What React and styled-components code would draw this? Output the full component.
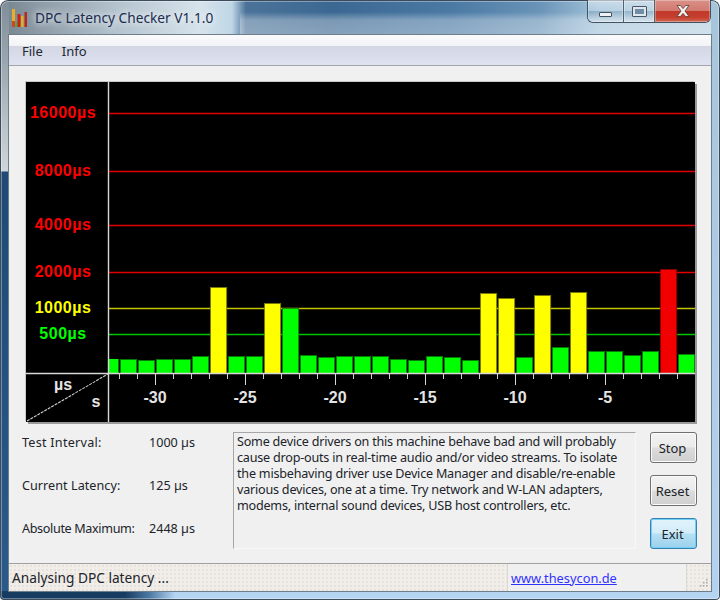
import React from "react";
import styled, { createGlobalStyle } from "styled-components";

const Global = createGlobalStyle`
  html, body { margin: 0; padding: 0; background: #fff; overflow: hidden; }
  #root { width: 720px; height: 600px; }
`;

const UI = `"Noto Sans", "Open Sans", sans-serif`;

const Win = styled.div`
  box-sizing: border-box;
  width: 720px;
  height: 600px;
  display: flex;
  flex-direction: column;
  padding: 0 9px 9px 9px;
  border-radius: 8px 8px 4px 4px;
  box-shadow: inset 0 0 0 1px #3c4c5a, inset 0 0 0 2px rgba(255,255,255,.35);
  background:
    linear-gradient(90deg, #173c62 0, #173c62 125px, #4f7ba4 150px, #b4d4f2 175px, #b4d4f2 100%) 0 100% / 100% 9px no-repeat,
    linear-gradient(180deg, #7f8d98 0, #a8b3bb 90px, #cfd6da 171px, #1f4a76 172px, #2a5a8c 100%) 0 0 / 9px 100% no-repeat,
    linear-gradient(180deg, #a6c4da 0, #b4d2ef 100%) 100% 0 / 9px 100% no-repeat,
    linear-gradient(180deg, rgba(255,255,255,0) 0, rgba(255,255,255,0) 12px, rgba(255,255,255,.32) 20px, rgba(255,255,255,.38) 35px) 240px 0 / 480px 35px no-repeat,
    linear-gradient(90deg, #74848f 0, #8d9ca7 40px, #b5c5d0 120px, #d6e3eb 200px, #c0d6e6 232px, #4b7399 246px, #3b6892 330px, #4a79a4 450px, #6a94b8 540px, #a2c3da 600px, #b8d0df 720px) 0 0 / 100% 35px no-repeat,
    #b4d4f2;
`;

const TitleBar = styled.header`
  flex: 0 0 35px;
  display: flex;
  align-items: flex-start;
  gap: 7px;
  padding-left: 3px;
`;

const AppIcon = styled.svg`
  flex: none;
  width: 16px;
  height: 18px;
  margin-top: 9px;
`;

const Title = styled.h1`
  margin: 9px 0 0;
  font: 400 13.7px/18px ${UI};
  color: #1a2c50;
  white-space: nowrap;
  text-shadow: 0 0 6px rgba(255,255,255,.9), 0 0 10px rgba(255,255,255,.7);
`;

const Caption = styled.div`
  margin-left: auto;
  height: 23px;
  display: flex;
  box-sizing: border-box;
  border: 1px solid #43525f;
  border-top: 0;
  border-radius: 0 0 6px 6px;
  overflow: hidden;
`;

const CapBtn = styled.div`
  box-sizing: border-box;
  width: ${p => p.$w}px;
  display: flex;
  align-items: center;
  justify-content: center;
  border-left: ${p => (p.$first ? "0" : "1px solid #51616e")};
  box-shadow: inset 0 0 0 1px rgba(255,255,255,.3);
  background: ${p =>
    p.$close
      ? "linear-gradient(180deg, #d99088 0, #d27a70 48%, #c2382a 52%, #c5402f 80%, #d26a58 100%)"
      : "linear-gradient(180deg, rgba(255,255,255,.42) 0, rgba(255,255,255,.22) 48%, rgba(40,70,100,.12) 52%, rgba(255,255,255,.25) 100%)"};
`;

const MinGlyph = styled.span`
  width: 11px;
  height: 3px;
  margin-top: 6px;
  background: #eef2f5;
  border: 1px solid #42525e;
  border-radius: 1px;
`;

const MaxGlyph = styled.span`
  box-sizing: border-box;
  width: 15px;
  height: 11px;
  margin-top: 1px;
  background: #dfe6ec;
  border: 1px solid #46566a;
  border-radius: 1px;
  display: flex;
  align-items: center;
  justify-content: center;
  &::after {
    content: "";
    width: 9px;
    height: 5px;
    background: #6f8da6;
    border: 0;
  }
`;

const Client = styled.main`
  flex: 1;
  min-height: 0;
  display: flex;
  flex-direction: column;
  background: #f0f0f0;
  box-shadow: 0 0 0 1px #6d7d8a;
  font: 400 12.6px/16px ${UI};
  color: #20242a;
`;

const MenuBar = styled.nav`
  flex: 0 0 30px;
  box-sizing: border-box;
  height: 31px;
  display: flex;
  align-items: center;
  gap: 19px;
  padding: 2px 0 0 13px;
  border-bottom: 1px solid #a3a5ad;
  background: linear-gradient(180deg, #fbfbfc 0, #f2f3f6 36%, #d3d7e4 38%, #dfe2f0 100%);
  flex-basis: 31px;
`;

const MenuItem = styled.span`
  font-size: 13px;
  color: #1f2733;
`;

const Plot = styled.section`
  flex: none;
  width: 669px;
  height: 340px;
  margin: 16px 0 0 17px;
  background: #000;
  box-shadow: 2px 2px 0 #9a9a9a, -1px -1px 0 #c8c8c8;
  svg { display: block; }
`;

const Lower = styled.div`
  flex: none;
  display: flex;
  margin-top: 10px;
  padding-left: 13px;
`;

const Info = styled.dl`
  flex: 0 0 211px;
  margin: 0;
  box-sizing: border-box;
  display: grid;
  grid-template-columns: 127px 1fr;
  grid-auto-rows: 22px;
  row-gap: 21px;
  align-items: center;
`;

const Term = styled.dt`
  white-space: nowrap;
  letter-spacing: ${p => p.$track}px;
`;

const Value = styled.dd`
  margin: 0;
  white-space: nowrap;
`;

const Message = styled.p`
  flex: none;
  box-sizing: border-box;
  width: 403px;
  height: 117px;
  margin: 0;
  padding: 1px 3px 0;
  letter-spacing: -0.22px;
  white-space: nowrap;
  border: 1px solid;
  border-color: #a6a6a6 #f8f8f8 #f8f8f8 #a6a6a6;
`;

const Buttons = styled.div`
  flex: none;
  display: flex;
  flex-direction: column;
  gap: 12px;
  margin-left: 14px;
`;

const Btn = styled.button`
  box-sizing: border-box;
  width: 47px;
  height: 31px;
  padding: 0 2px 0 0;
  font: inherit;
  font-size: 13px;
  color: #20242a;
  border-radius: 3px;
  border: 1px solid ${p => (p.$default ? "#3c7fb1" : "#707070")};
  box-shadow: inset 0 0 0 1px ${p => (p.$default ? "#6fd0f5" : "#fbfbfb")};
  background: ${p =>
    p.$default
      ? "linear-gradient(180deg, #e2f3fb 0, #d2ecf9 48%, #b6dff4 52%, #9dd1ec 100%)"
      : "linear-gradient(180deg, #f2f2f2 0, #ebebeb 48%, #dcdcdc 52%, #cfcfcf 100%)"};
`;

const StatusBar = styled.footer`
  margin-top: auto;
  flex: 0 0 27px;
  display: flex;
  align-items: stretch;
  border-top: 1px solid #a0a0a0;
  background:
    radial-gradient(circle, rgba(170,160,150,.35) 0.6px, transparent 0.8px) 0 0 / 4px 4px,
    #f1ede9;
`;

const StatusText = styled.div`
  flex: 0 0 498px;
  box-sizing: border-box;
  padding: 6px 0 0 3px;
  font-size: 13.7px;
  white-space: nowrap;
`;

const LinkPane = styled.div`
  flex: 0 0 180px;
  box-sizing: border-box;
  padding: 6px 0 0 3px;
  font-size: 12.8px;
  background: #f0f0f0;
  border-left: 1px solid #dcd8d4;
  border-right: 1px solid #dcd8d4;
`;

const SiteLink = styled.a`
  color: #3232ff;
  text-decoration: underline;
`;

const Grip = styled.svg`
  flex: none;
  align-self: flex-end;
  margin: 0 0 2px 11px;
  width: 10px;
  height: 10px;
`;

const BARS = [
  [120,359,"g"],[138,360,"g"],[156,359,"g"],[174,359,"g"],[192,356,"g"],[210,287,"y"],[228,356,"g"],[246,356,"g"],
  [264,303,"y"],[282,308,"g"],[300,355,"g"],[318,357,"g"],[336,356,"g"],[354,356,"g"],[372,356,"g"],[390,359,"g"],
  [408,360,"g"],[426,356,"g"],[444,357,"g"],[462,360,"g"],[480,293,"y"],[498,298,"y"],[516,357,"g"],[534,295,"y"],
  [552,347,"g"],[570,292,"y"],[588,351,"g"],[606,351,"g"],[624,355,"g"],[642,351,"g"],[660,269,"r"],[678,354,"g"],
];
const FILL = { g: "#00ff00", y: "#ffff00", r: "#f20000" };
const EDGE = { g: "#067a06", y: "#77770a", r: "#8a0000" };

const GRID = [
  [113, "#e00000", "16000µs", "#ff0000"],
  [171, "#e00000", "8000µs", "#ff0000"],
  [225, "#e00000", "4000µs", "#ff0000"],
  [272, "#e00000", "2000µs", "#ff0000"],
  [308, "#c4c400", "1000µs", "#ffff00"],
  [334, "#00c400", "500µs", "#00ff00"],
];

const OX = 26, OY = 82;
const labelFont = { fontFamily: '"Liberation Sans", Arial, sans-serif', fontWeight: 700, fontSize: 16 };

function Chart() {
  const ticks = Array.from({ length: 32 }, (_, i) => 119 + 18 * i);
  const longs = [155, 245, 335, 425, 515, 605];
  const names = ["-30", "-25", "-20", "-15", "-10", "-5"];
  return (
    <svg width="669" height="340" viewBox={`${OX} ${OY} 669 340`}>
      {GRID.map(([y, c]) => (
        <rect key={y} x="108" y={y - 0.25} width="587" height="1.5" fill={c} />
      ))}
      <rect x="109" y="359" width="9.5" height="14" fill="#00ff00" />
      {BARS.map(([x, top, k]) => (
        <rect key={x} x={x + 0.5} y={top + 0.5} width="16.2" height={373 - top} fill={FILL[k]} stroke={EDGE[k]} strokeWidth="0.8" />
      ))}
      {GRID.map(([y, , t, c]) => (
        <text key={t} x="63" y={y + 5} textAnchor="middle" fill={c} letterSpacing="0.5" {...labelFont}>{t}</text>
      ))}
      <line x1="108.5" x2="108.5" y1="82" y2="422" stroke="#d8d8d8" strokeWidth="1.4" />
      <line x1="26" x2="695" y1="373.5" y2="373.5" stroke="#d8d8d8" strokeWidth="1.4" />
      {ticks.map(x => (
        <line key={x} x1={x + 0.5} x2={x + 0.5} y1="374" y2="379" stroke="#d0d0d0" strokeWidth="1" />
      ))}
      {longs.map((x, i) => (
        <g key={x}>
          <line x1={x + 0.5} x2={x + 0.5} y1="374" y2="385" stroke="#d8d8d8" strokeWidth="1" />
          <text x={x} y="403" textAnchor="middle" fill="#e4e4e4" {...labelFont}>{names[i]}</text>
        </g>
      ))}
      <line x1="27" y1="421" x2="108" y2="374" stroke="#cfcfcf" strokeWidth="1.1" strokeDasharray="3 1" />
      <text x="63" y="390" textAnchor="middle" fill="#e4e4e4" {...labelFont}>µs</text>
      <text x="96" y="407" textAnchor="middle" fill="#e4e4e4" {...labelFont}>s</text>
    </svg>
  );
}

export default function App() {
  return (
    <Win>
      <Global />
      <TitleBar>
        <AppIcon viewBox="0 0 16 18">
          <rect x="0" y="0" width="3" height="18" fill="#e8b020" />
          <rect x="0" y="12" width="3" height="6" fill="#d04818" />
          <rect x="3.5" y="13" width="2" height="5" fill="#40b030" />
          <rect x="5.5" y="5" width="3" height="13" fill="#c82018" />
          <rect x="9" y="7" width="2.5" height="11" fill="#e0b020" />
          <rect x="12.5" y="3" width="2.5" height="15" fill="#b82818" />
        </AppIcon>
        <Title>DPC Latency Checker V1.1.0</Title>
        <Caption>
          <CapBtn $w={35} $first><MinGlyph /></CapBtn>
          <CapBtn $w={31}><MaxGlyph /></CapBtn>
          <CapBtn $w={56} $close>
            <svg width="16" height="14" viewBox="0 0 16 14">
              <path d="M2 1.5h3.4L8 4.6l2.6-3.1H14L10 7l4 5.5h-3.4L8 9.4l-2.6 3.1H2L6 7z" fill="#f2efec" stroke="#5c3a36" strokeWidth="0.8" />
            </svg>
          </CapBtn>
        </Caption>
      </TitleBar>
      <Client>
        <MenuBar>
          <MenuItem>File</MenuItem>
          <MenuItem>Info</MenuItem>
        </MenuBar>
        <Plot><Chart /></Plot>
        <Lower>
          <Info>
            <Term $track={0.25}>Test Interval:</Term><Value>1000 µs</Value>
            <Term $track={0.05}>Current Latency:</Term><Value>125 µs</Value>
            <Term $track={-0.35}>Absolute Maximum:</Term><Value>2448 µs</Value>
          </Info>
          <Message>
            Some device drivers on this machine behave bad and will probably<br />
            cause drop-outs in real-time audio and/or video streams. To isolate<br />
            the misbehaving driver use Device Manager and disable/re-enable<br />
            various devices, one at a time. Try network and W-LAN adapters,<br />
            modems, internal sound devices, USB host controllers, etc.
          </Message>
          <Buttons>
            <Btn>Stop</Btn>
            <Btn>Reset</Btn>
            <Btn $default>Exit</Btn>
          </Buttons>
        </Lower>
        <StatusBar>
          <StatusText>Analysing DPC latency ...</StatusText>
          <LinkPane><SiteLink href="#">www.thesycon.de</SiteLink></LinkPane>
          <Grip viewBox="0 0 10 10">
            {[[8,0],[8,3],[5,3],[8,6],[5,6],[2,6]].map(([x, y]) => (
              <rect key={`${x}-${y}`} x={x} y={y} width="1.5" height="1.5" fill="#a8a8a8" />
            ))}
          </Grip>
        </StatusBar>
      </Client>
    </Win>
  );
}
